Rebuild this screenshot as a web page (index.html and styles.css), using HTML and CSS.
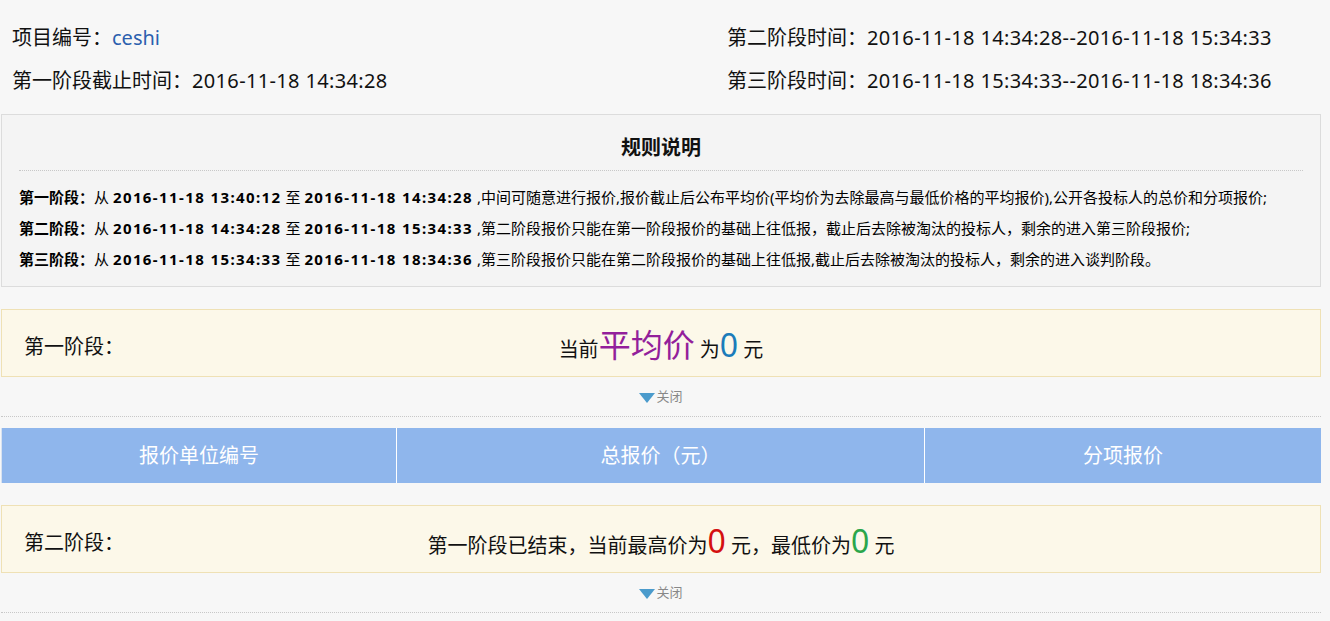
FILE: index.html
```html
<!DOCTYPE html>
<html lang="zh-CN">
<head>
    <meta charset="UTF-8">
    <title>竞价详情</title>
    <link rel="stylesheet" href="styles.css">
</head>
<body>
    <div class="page">
        <div class="info">
            <div class="info-col left">
                <p>项目编号：<span class="code">ceshi</span></p>
                <p>第一阶段截止时间：<span class="time">2016-11-18 14:34:28</span></p>
            </div>
            <div class="info-col">
                <p>第二阶段时间：<span class="time">2016-11-18 14:34:28--2016-11-18 15:34:33</span></p>
                <p>第三阶段时间：<span class="time">2016-11-18 15:34:33--2016-11-18 18:34:36</span></p>
            </div>
        </div>

        <div class="rules">
            <h3>规则说明</h3>
            <ul>
                <li><b>第一阶段：</b>从 <b class="time">2016-11-18 13:40:12</b> 至 <b class="time">2016-11-18 14:34:28</b> ,中间可随意进行报价,报价截止后公布平均价(平均价为去除最高与最低价格的平均报价),公开各投标人的总价和分项报价;</li>
                <li><b>第二阶段：</b>从 <b class="time">2016-11-18 14:34:28</b> 至 <b class="time">2016-11-18 15:34:33</b> ,第二阶段报价只能在第一阶段报价的基础上往低报，截止后去除被淘汰的投标人，剩余的进入第三阶段报价;</li>
                <li><b>第三阶段：</b>从 <b class="time">2016-11-18 15:34:33</b> 至 <b class="time">2016-11-18 18:34:36</b> ,第三阶段报价只能在第二阶段报价的基础上往低报,截止后去除被淘汰的投标人，剩余的进入谈判阶段。</li>
            </ul>
        </div>

        <div class="stage">
            <div class="stage-box">
                <span class="stage-name">第一阶段：</span>
                <span class="stage-msg">当前<em class="avg">平均价</em> 为<em class="num blue">0</em> 元</span>
                <span></span>
            </div>
            <div class="toggle"><i class="arrow"></i>关闭</div>
            <div class="quote-head">
                <div>报价单位编号</div>
                <div>总报价（元）</div>
                <div>分项报价</div>
            </div>
        </div>

        <div class="stage">
            <div class="stage-box">
                <span class="stage-name">第二阶段：</span>
                <span class="stage-msg">第一阶段已结束，当前最高价为<em class="num red">0</em> 元，最低价为<em class="num green">0</em> 元</span>
                <span></span>
            </div>
            <div class="toggle"><i class="arrow"></i>关闭</div>
        </div>
    </div>
</body>
</html>
```

FILE: styles.css
```css
* {
    margin: 0;
    padding: 0;
    box-sizing: border-box;
}

body {
    font-family: "Noto Sans", "Noto Sans CJK TC", sans-serif;
    background-color: #f7f7f7;
    color: #111;
}

.page {
    width: 1321px;
    padding-left: 1px;
}

/* top info */
.info {
    display: grid;
    grid-template-columns: 726px 1fr;
    padding-top: 16px;
    font-size: 20px;
    line-height: 43px;
}

.info-col.left {
    padding-left: 11px;
}

.info .time {
    letter-spacing: 0.35px;
}

.code {
    color: #2b5fae;
}

/* rules */
.rules {
    margin-top: 12px;
    background-color: #f4f4f4;
    border: 1px solid #dcdcdc;
    padding: 13px 17px 11px;
}

.rules h3 {
    font-size: 20px;
    line-height: 40px;
    text-align: center;
    padding-bottom: 2px;
    border-bottom: 1px dotted #c8c8c8;
}

.rules ul {
    list-style: none;
    margin-top: 11px;
    font-size: 15px;
    line-height: 31px;
    color: #000;
}

.rules .time {
    letter-spacing: 1.4px;
}

/* stages */
.stage-box {
    margin-top: 22px;
    height: 68px;
    background-color: #fcf8e9;
    border: 1px solid #efe1b5;
    display: grid;
    grid-template-columns: 1fr auto 1fr;
    align-items: center;
    font-size: 20px;
}

.stage-name {
    padding-left: 22px;
    padding-top: 4px;
}

.stage-msg {
    line-height: 1;
    padding-top: 4px;
}

.stage-msg em {
    font-style: normal;
    font-size: 32px;
}

.avg {
    color: #931f9b;
}

.num.blue {
    color: #1b7cba;
}

.num.red {
    color: #d40f0f;
}

.num.green {
    color: #2aa64b;
}

.toggle {
    text-align: center;
    font-size: 13px;
    line-height: 39px;
    color: #888;
    border-bottom: 1px dotted #c8c8c8;
}

.arrow {
    display: inline-block;
    vertical-align: middle;
    border-left: 8px solid transparent;
    border-right: 8px solid transparent;
    border-top: 10px solid #4b9bcc;
    margin-right: 1px;
}

.quote-head {
    margin-top: 11px;
    display: grid;
    grid-template-columns: 394px 528px 1fr;
    background-color: #8fb6ec;
    border-left: 1px solid #d8e2f0;
    color: #fff;
    font-size: 20px;
    line-height: 55px;
    text-align: center;
}

.quote-head div + div {
    border-left: 1px solid #fff;
}
```
